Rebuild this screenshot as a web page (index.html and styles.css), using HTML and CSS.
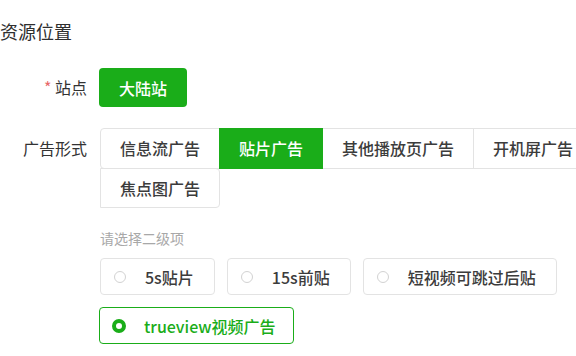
FILE: index.html
```html
<!DOCTYPE html>
<html lang="zh-CN">
<head>
<meta charset="utf-8">
<link rel="stylesheet" href="styles.css">
</head>
<body>
<div class="page">
  <h2 class="title">资源位置</h2>
  <div class="row row-station">
    <div class="label"><span class="req">*</span> 站点</div>
    <div class="content">
      <button class="btn-primary">大陆站</button>
    </div>
  </div>
  <div class="row row-type">
    <div class="label label-tabs">广告形式</div>
    <div class="content">
      <div class="tabs">
        <div class="tab">信息流广告</div>
        <div class="tab tab-active">贴片广告</div>
        <div class="tab">其他播放页广告</div>
        <div class="tab">开机屏广告</div>
        <div class="tab">焦点图广告</div>
      </div>
      <div class="hint">请选择二级项</div>
      <div class="radios">
        <div class="radio"><span class="dot"></span><span class="radio-text">5s贴片</span></div>
        <div class="radio"><span class="dot"></span><span class="radio-text">15s前贴</span></div>
        <div class="radio"><span class="dot"></span><span class="radio-text">短视频可跳过后贴</span></div>
        <div class="radio radio-checked"><span class="dot"></span><span class="radio-text">trueview视频广告</span></div>
      </div>
    </div>
  </div>
</div>
</body>
</html>
```

FILE: styles.css
```css
html, body {
  margin: 0;
  padding: 0;
  background: #ffffff;
  overflow: hidden;
}
body {
  font-family: "Noto Sans CJK SC", "Noto Sans", sans-serif;
  color: #353535;
  width: 576px;
  height: 356px;
}
.page {
  padding-top: 18px;
  width: 620px;
}
.title {
  margin: 0;
  font-size: 18px;
  line-height: 26px;
  font-weight: 400;
  color: #2f2f2f;
}
.row {
  display: flex;
  gap: 13px;
}
.row-station {
  margin-top: 24px;
}
.row-type {
  margin-top: 21px;
}
.label {
  width: 87px;
  flex: none;
  text-align: right;
  font-size: 16px;
  line-height: 39px;
  color: #333;
}
.label-tabs {
  line-height: 40px;
}
.req {
  color: #e8686a;
}
.content {
  width: 500px;
  flex: none;
}
.btn-primary {
  display: block;
  margin-left: -1px;
  height: 39px;
  width: 88px;
  border: none;
  border-radius: 4px;
  background: #1aad19;
  color: #fff;
  font-family: inherit;
  font-size: 16px;
  font-weight: 500;
  padding: 0;
}
.tabs {
  display: flex;
  flex-wrap: wrap;
}
.tab {
  box-sizing: border-box;
  height: 41px;
  padding: 0 19px;
  border: 1px solid #e3e3e3;
  margin-right: -1px;
  margin-bottom: -1px;
  font-size: 16px;
  font-weight: 500;
  line-height: 39px;
  color: #3c3c3c;
  background: #fff;
}
.tab:first-child {
  border-radius: 4px 0 0 4px;
}
.tab:last-child {
  border-radius: 0 4px 4px 0;
  height: 40px;
  line-height: 38px;
}
.tab-active {
  background: #1aad19;
  border-color: #1aad19;
  color: #fff;
  position: relative;
}
.hint {
  margin-top: 21px;
  font-size: 14px;
  line-height: 20px;
  color: #a8a8a8;
}
.radios {
  margin-top: 10px;
  display: flex;
  flex-wrap: wrap;
  gap: 12px 12px;
}
.radio {
  box-sizing: border-box;
  height: 37px;
  display: flex;
  align-items: center;
  padding: 0 20px 0 13px;
  border: 1px solid #e3e3e3;
  border-radius: 4px;
}
.dot {
  box-sizing: border-box;
  width: 12px;
  height: 12px;
  border: 1px solid #d2d2d2;
  border-radius: 50%;
  margin-right: 19px;
  flex: none;
}
.radio-text {
  font-size: 16px;
  font-weight: 500;
  color: #3c3c3c;
}
.radio-checked {
  border-color: #1aad19;
  margin-left: -1px;
  padding-right: 17px;
}
.radio-checked .dot {
  width: 14px;
  height: 14px;
  border: 4px solid #1aad19;
  background: #fff;
  margin-left: -1px;
  margin-right: 18px;
}
.radio-checked .radio-text {
  color: #1aad19;
}
```
